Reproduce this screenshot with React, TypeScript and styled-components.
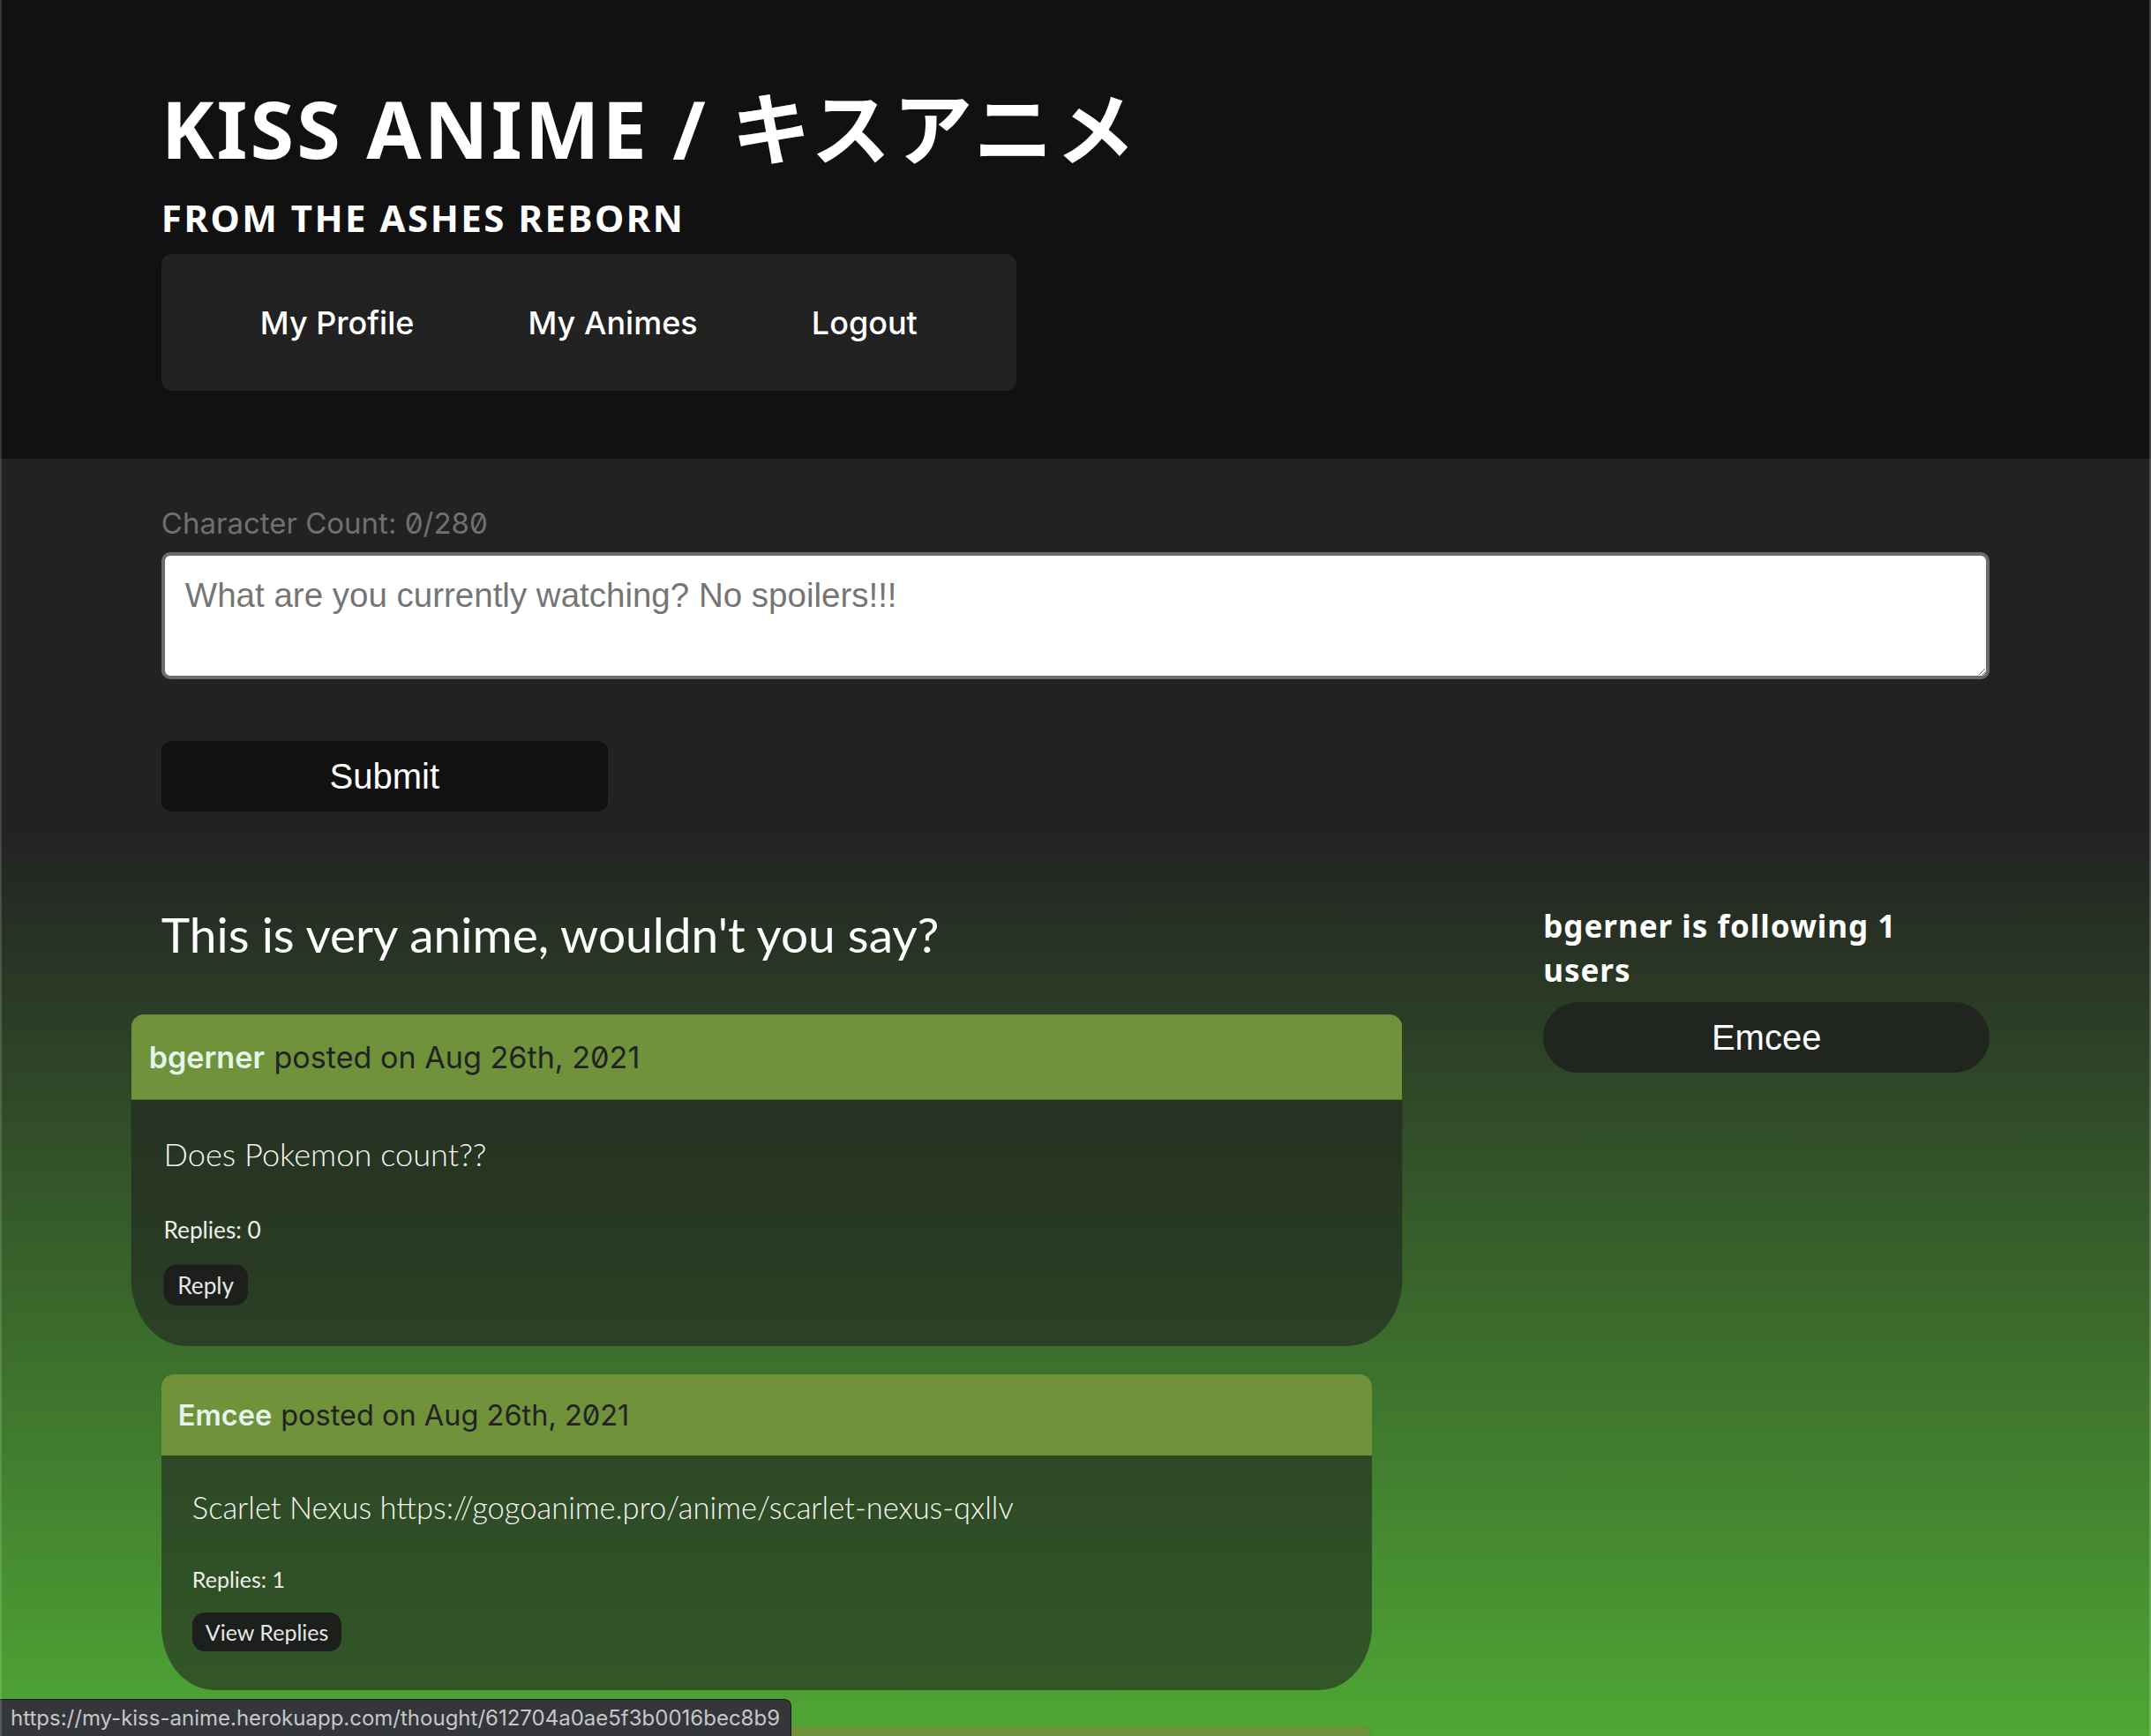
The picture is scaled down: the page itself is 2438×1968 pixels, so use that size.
import React from "react";
import styled, { createGlobalStyle } from "styled-components";

const GlobalStyle = createGlobalStyle`
  html, body {
    margin: 0;
    padding: 0;
    background: #111;
  }
  body {
    overflow: hidden;
  }
  *, *::before, *::after {
    box-sizing: border-box;
  }
`;

const Page = styled.div`
  height: 100vh;
  display: flex;
  flex-direction: column;
  overflow: hidden;
`;

const WindowFrame = styled.div`
  position: fixed;
  inset: 0;
  pointer-events: none;
  border-left: 2px solid rgba(255, 255, 255, 0.16);
  border-right: 2px solid rgba(255, 255, 255, 0.2);
  z-index: 5;
`;

const Header = styled.header`
  flex: none;
  background: #111;
  padding: 91px 0 77px;
`;

const Container = styled.div`
  width: 85%;
  margin: 0 auto;
`;

const Title = styled.h1`
  margin: 0;
  font-family: "Noto Sans", "Noto Sans CJK JP", sans-serif;
  font-weight: 700;
  font-size: 90px;
  line-height: 108px;
  letter-spacing: 3px;
  color: #fff;
`;

const Subtitle = styled.h2`
  margin: 23px 0 0;
  font-family: "Noto Sans", sans-serif;
  font-weight: 700;
  font-size: 42px;
  line-height: 50px;
  letter-spacing: 2.5px;
  color: #fff;
`;

const Nav = styled.nav`
  margin-top: 16px;
  width: 969px;
  height: 155px;
  background: #222;
  border-radius: 12px;
  display: flex;
  align-items: center;
  justify-content: space-between;
  padding: 0 112px;
`;

const NavLink = styled.a`
  font-family: Inter, "Liberation Sans", sans-serif;
  font-size: 36px;
  font-weight: 500;
  line-height: 44px;
  color: #fff;
  text-decoration: none;
`;

const Main = styled.main`
  flex: 1;
  overflow: hidden;
  background: linear-gradient(180deg, #222 0, #222 420px, #4fa734 100%);
`;

const Composer = styled.form`
  padding-top: 55px;
  display: flex;
  flex-direction: column;
  align-items: flex-start;
`;

const CharCount = styled.label`
  display: block;
  font-family: Inter, "Liberation Sans", sans-serif;
  font-size: 33px;
  line-height: 37px;
  color: #707070;
  font-feature-settings: "zero" 1;
`;

const TextArea = styled.textarea`
  display: block;
  width: 100%;
  height: 144px;
  margin-top: 14px;
  border: 4px solid #6b6b6b;
  border-radius: 10px;
  padding: 23px;
  font-family: "Liberation Sans", Arial, sans-serif;
  font-size: 38.5px;
  line-height: 44px;
  color: #222;
  background: #fff;
  resize: vertical;
  outline: none;

  &::placeholder {
    color: #757575;
  }
`;

const SubmitButton = styled.button`
  margin-top: 70px;
  width: 506px;
  height: 80px;
  border: none;
  border-radius: 12px;
  background: #111;
  color: #fff;
  font-family: "Liberation Sans", Arial, sans-serif;
  font-size: 40px;
  cursor: pointer;
`;

const Columns = styled.div`
  display: flex;
  justify-content: space-between;
  align-items: flex-start;
  margin-top: 105px;
`;

const Feed = styled.section`
  flex: none;
  width: 1372px;
`;

const FeedTitle = styled.h3`
  margin: 0 0 66px;
  font-family: Lato, sans-serif;
  font-weight: 400;
  font-size: 55px;
  line-height: 68px;
  color: #fff;
`;

const PostCard = styled.article<{ $hovered?: boolean }>`
  margin-bottom: 41px;
  border-radius: 14px 14px 60px 60px / 14px 14px 72px 72px;
  overflow: hidden;
  background: rgba(30, 30, 30, 0.56);
  transform: ${(p) => (p.$hovered ? "scale(1.05)" : "none")};
  transform-origin: center center;
`;

const PostHeader = styled.div`
  height: 92px;
  display: flex;
  align-items: center;
  padding: 0 19px;
  background: #6f923b;
  font-family: Inter, "Liberation Sans", sans-serif;
  font-size: 32.5px;
  line-height: 39px;
  color: #222;
  font-feature-settings: "zero" 1;
`;

const Author = styled.a`
  color: #e4f4ea;
  font-weight: 600;
  text-decoration: none;
  margin-right: 10px;
`;

const PostBody = styled.div`
  padding: 38px 35px 44px;
`;

const PostText = styled.p`
  margin: 0 0 45px;
  font-family: Lato, sans-serif;
  font-weight: 300;
  font-size: 34.5px;
  line-height: 42px;
  color: #f4f4f4;
`;

const Replies = styled.p`
  margin: 0 0 23px;
  font-family: Lato, sans-serif;
  font-weight: 400;
  font-size: 25px;
  line-height: 30px;
  color: #eee;
`;

const SmallButton = styled.button`
  height: 44px;
  padding: 0 15px;
  border: none;
  border-radius: 14px;
  background: #1c1f1b;
  color: #e6e6e6;
  font-family: Lato, sans-serif;
  font-size: 25px;
  cursor: pointer;
`;

const Sidebar = styled.aside`
  flex: none;
  width: 506px;
`;

const FollowTitle = styled.h4`
  margin: 0 0 11px;
  max-width: 440px;
  font-family: "Noto Sans", sans-serif;
  font-weight: 700;
  font-size: 35px;
  line-height: 50px;
  letter-spacing: 1px;
  color: #fff;
`;

const FriendButton = styled.button`
  display: block;
  width: 100%;
  height: 80px;
  border: none;
  border-radius: 40px;
  background: #20251f;
  color: #fff;
  font-family: "Liberation Sans", Arial, sans-serif;
  font-size: 40px;
  cursor: pointer;
`;

const StatusBar = styled.div`
  position: fixed;
  left: 0;
  bottom: 0;
  height: 42px;
  padding: 0 12px;
  display: flex;
  align-items: center;
  background: #35363a;
  border-top: 1px solid #1c1c1e;
  border-right: 1px solid #1c1c1e;
  border-top-right-radius: 8px;
  font-family: Inter, "Liberation Sans", sans-serif;
  font-size: 24px;
  line-height: 29px;
  color: #c6c6c8;
  z-index: 4;
`;

type Post = {
  author: string;
  date: string;
  text: string;
  replies: number;
  hovered?: boolean;
};

const posts: Post[] = [
  { author: "bgerner", date: "Aug 26th, 2021", text: "Does Pokemon count??", replies: 0, hovered: true },
  {
    author: "Emcee",
    date: "Aug 26th, 2021",
    text: "Scarlet Nexus https://gogoanime.pro/anime/scarlet-nexus-qxllv",
    replies: 1,
  },
  { author: "bgerner", date: "Aug 26th, 2021", text: "Anyone watching Jujutsu Kaisen?", replies: 0 },
];

export default function App() {
  return (
    <>
      <GlobalStyle />
      <Page>
        <Header>
          <Container>
            <Title>KISS ANIME / キスアニメ</Title>
            <Subtitle>FROM THE ASHES REBORN</Subtitle>
            <Nav>
              <NavLink href="#">My Profile</NavLink>
              <NavLink href="#">My Animes</NavLink>
              <NavLink href="#">Logout</NavLink>
            </Nav>
          </Container>
        </Header>
        <Main>
          <Container>
            <Composer onSubmit={(e) => e.preventDefault()}>
              <CharCount htmlFor="thought">Character Count: 0/280</CharCount>
              <TextArea id="thought" placeholder="What are you currently watching? No spoilers!!!" />
              <SubmitButton type="submit">Submit</SubmitButton>
            </Composer>
            <Columns>
              <Feed>
                <FeedTitle>This is very anime, wouldn't you say?</FeedTitle>
                {posts.map((p, i) => (
                  <PostCard key={i} $hovered={p.hovered}>
                    <PostHeader>
                      <Author href="#">{p.author}</Author>
                      posted on {p.date}
                    </PostHeader>
                    <PostBody>
                      <PostText>{p.text}</PostText>
                      <Replies>Replies: {p.replies}</Replies>
                      <SmallButton>{p.replies > 0 ? "View Replies" : "Reply"}</SmallButton>
                    </PostBody>
                  </PostCard>
                ))}
              </Feed>
              <Sidebar>
                <FollowTitle>bgerner is following 1 users</FollowTitle>
                <FriendButton>Emcee</FriendButton>
              </Sidebar>
            </Columns>
          </Container>
        </Main>
      </Page>
      <StatusBar>https://my-kiss-anime.herokuapp.com/thought/612704a0ae5f3b0016bec8b9</StatusBar>
      <WindowFrame />
    </>
  );
}
